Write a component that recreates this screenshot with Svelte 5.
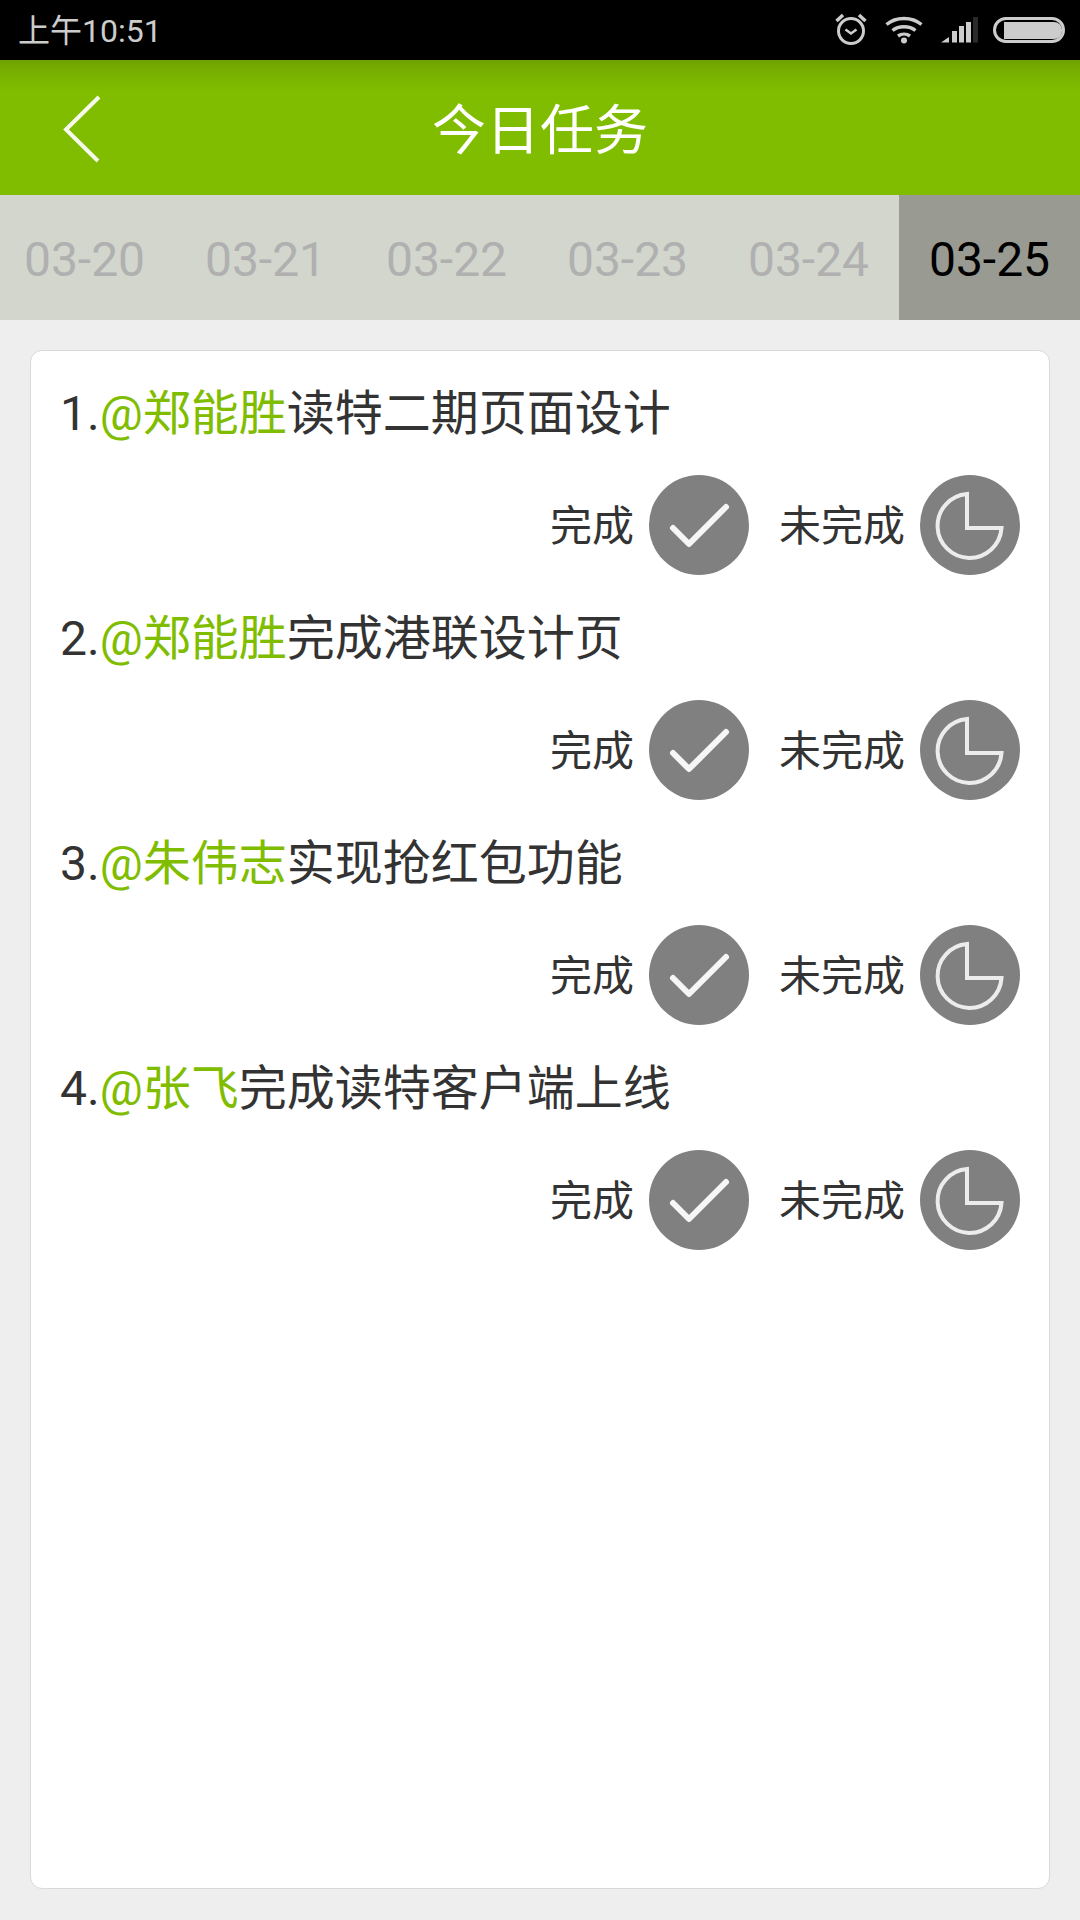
<script lang="ts">
    // Date tabs, last one is selected
    const dates: string[] = ["03-20", "03-21", "03-22", "03-23", "03-24", "03-25"];
    const activeDate = "03-25";

    const tasks = [
        { who: "@郑能胜", what: "读特二期页面设计" },
        { who: "@郑能胜", what: "完成港联设计页" },
        { who: "@朱伟志", what: "实现抢红包功能" },
        { who: "@张飞", what: "完成读特客户端上线" },
    ];
</script>

<div class="page">
    <div class="statusbar">
        <span class="time">上午10:51</span>
        <div class="status-icons">
            <svg class="alarm" width="32" height="32" viewBox="0 0 32 32" fill="none" stroke="#ccc">
                <circle cx="16" cy="18" r="12.500" stroke-width="3" />
                <path d="M10.500 16.500l5.500 4 5.500-4" stroke-width="2.500" />
                <path d="M1.500 8L8 2M30.500 8L24 2" stroke-width="3.500" />
            </svg>
            <svg class="wifi" width="38" height="28" viewBox="0 0 38 28" fill="none" stroke="#ccc" stroke-width="3.400">
                <path d="M1.500 8.500C11 .5 27 .5 36.500 8.500" />
                <path d="M7.500 14.500C13.500 9.500 24.500 9.500 30.500 14.500" />
                <path d="M13 20C16.500 17.500 21.500 17.500 25 20" />
                <circle cx="19" cy="24.500" r="3" fill="#ccc" stroke="none" />
            </svg>
            <svg class="signal" width="37" height="26" viewBox="0 0 37 26">
                <path d="M0 25.500L8 20V25.500Z" fill="#ccc" />
                <rect x="11" y="14" width="5" height="11.500" fill="#ccc" />
                <rect x="18" y="9" width="5" height="16.500" fill="#ccc" />
                <rect x="25" y="5" width="5" height="20.500" fill="#ccc" />
                <rect x="32" y="0" width="5" height="25.500" fill="#2a2a2a" />
            </svg>
            <div class="battery"><div class="battery-fill"></div></div>
        </div>
    </div>

    <header class="topbar">
        <svg class="back" width="42" height="72" viewBox="0 0 42 72" fill="none" stroke="#f6faec" stroke-width="4">
            <path d="M37 4L4 36.500L36 68" />
        </svg>
        <h1>今日任务</h1>
    </header>

    <nav class="dates">
        {#each dates as d}
            <div class="date" class:active={d === activeDate}>{d}</div>
        {/each}
    </nav>

    <main class="content">
        <section class="card">
            {#each tasks as task, i}
                <article class="task">
                    <p class="title">{i + 1}.<span class="who">{task.who}</span>{task.what}</p>
                    <div class="actions">
                        <span class="label">完成</span>
                        <span class="circle">
                            <svg width="100" height="100" viewBox="0 0 100 100" fill="none" stroke="#f6f6f6" stroke-width="6" stroke-linecap="round" stroke-linejoin="round">
                                <path d="M24 53L40 69L77 32" />
                            </svg>
                        </span>
                        <span class="label second">未完成</span>
                        <span class="circle">
                            <svg width="100" height="100" viewBox="0 0 100 100" fill="none" stroke="#ececec" stroke-width="4">
                                <path d="M47 19A32 32 0 1 0 81.500 53H47Z" />
                            </svg>
                        </span>
                    </div>
                </article>
            {/each}
        </section>
    </main>
</div>

<style>
    :global(body) {
        margin: 0;
        background: #eeeeee;
    }

    .page {
        width: 1080px;
        height: 1920px;
        display: flex;
        flex-direction: column;
        font-family: Roboto, "Noto Sans CJK SC", sans-serif;
        overflow: hidden;
    }

    .statusbar {
        height: 60px;
        background: #000;
        display: flex;
        align-items: center;
        justify-content: space-between;
        padding: 0 15px 0 18px;
        box-sizing: border-box;
    }

    .time {
        color: #ccc;
        font-size: 32px;
        padding-bottom: 4px;
    }

    .status-icons {
        display: flex;
        align-items: center;
    }

    .alarm { margin-right: 18px; margin-bottom: 2px; }
    .wifi { margin-right: 18px; margin-bottom: 1px; }
    .signal { margin-right: 15px; }

    .battery {
        width: 72px;
        height: 26px;
        border: 3px solid #ccc;
        border-radius: 14px;
        box-sizing: border-box;
        display: flex;
        align-items: center;
        justify-content: flex-end;
    }

    .battery-fill {
        width: 58px;
        height: 17px;
        background: #ccc;
        border-radius: 0 8px 8px 0;
    }

    .topbar {
        height: 135px;
        background: linear-gradient(#6ea200, #78b000 12px, #80bd00 32px);
        display: flex;
        align-items: center;
        justify-content: center;
        position: relative;
    }

    .back {
        position: absolute;
        left: 62px;
        top: 33px;
    }

    .topbar h1 {
        margin: 0 0 2px;
        color: #fff;
        font-size: 54px;
        font-weight: 400;
    }

    .dates {
        height: 125px;
        background: #d3d6cd;
        display: flex;
        justify-content: flex-end;
    }

    .date {
        flex: 0 0 181px;
        display: flex;
        align-items: center;
        justify-content: center;
        font-size: 48px;
        padding-top: 3px;
        box-sizing: border-box;
        color: #b0b0b0;
    }

    .date.active {
        background: #999a92;
        color: #000;
    }

    .content {
        flex: 1;
        padding: 30px 30px 31px;
        display: flex;
    }

    .card {
        flex: 1;
        background: #fff;
        border: 1px solid #d9d9d9;
        border-radius: 12px;
        padding-top: 24px;
        box-sizing: border-box;
    }

    .task {
        height: 225px;
        padding: 0 29px 0 29px;
    }

    .title {
        margin: 0;
        height: 78px;
        line-height: 78px;
        font-size: 48px;
        color: #333;
    }

    .who {
        color: #80bd00;
    }

    .actions {
        margin-top: 22px;
        display: flex;
        align-items: center;
        justify-content: flex-end;
    }

    .label {
        font-size: 42px;
        color: #333;
        margin-right: 15px;
        padding-bottom: 6px;
    }

    .label.second {
        margin-left: 30px;
    }

    .circle {
        width: 100px;
        height: 100px;
        border-radius: 50%;
        background: #808080;
        display: block;
    }

    .circle svg {
        display: block;
    }
</style>
